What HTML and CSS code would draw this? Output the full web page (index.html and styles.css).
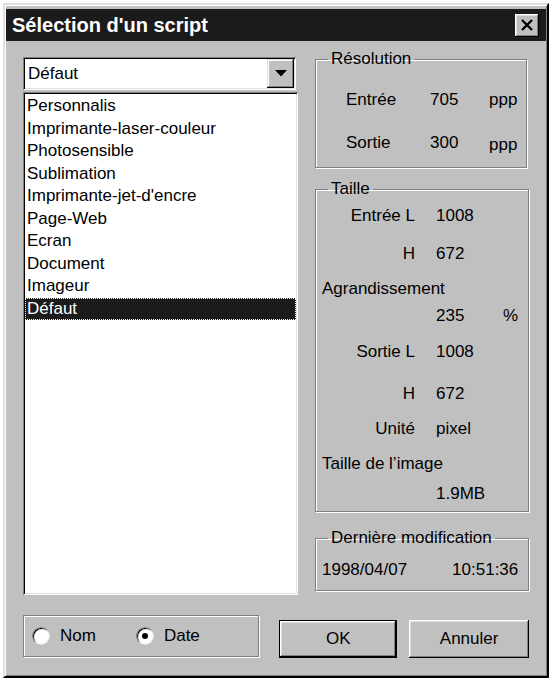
FILE: index.html
```html
<!DOCTYPE html>
<html lang="fr">
<head>
    <meta charset="UTF-8">
    <title>Sélection d'un script</title>
    <link rel="stylesheet" href="styles.css">
</head>
<body>

<div class="window">
    <div class="titlebar">
        <span class="title">Sélection d'un script</span>
        <button class="close-btn">
            <svg width="14" height="12" viewBox="0 0 14 12">
                <path d="M2 1 L12 11 M12 1 L2 11" stroke="#000" stroke-width="2.4" fill="none"/>
            </svg>
        </button>
    </div>

    <div class="content">
        <div class="main">
            <div class="left-col">
                <div class="combo">
                    <span class="combo-value">Défaut</span>
                    <span class="combo-btn">
                        <svg width="12" height="7" viewBox="0 0 12 7"><path d="M0 0 H12 L6 6.5 Z" fill="#000"/></svg>
                    </span>
                </div>
                <ul class="listbox">
                    <li>Personnalis</li>
                    <li>Imprimante-laser-couleur</li>
                    <li>Photosensible</li>
                    <li>Sublimation</li>
                    <li>Imprimante-jet-d'encre</li>
                    <li>Page-Web</li>
                    <li>Ecran</li>
                    <li>Document</li>
                    <li>Imageur</li>
                    <li class="selected">Défaut</li>
                </ul>
            </div>

            <div class="right-col">
                <fieldset class="group group-res">
                    <legend>Résolution</legend>
                    <div class="res-grid">
                        <span>Entrée</span><span>705</span><span>ppp</span>
                        <span>Sortie</span><span>300</span><span class="low">ppp</span>
                    </div>
                </fieldset>

                <fieldset class="group group-size">
                    <legend>Taille</legend>
                    <div class="size-grid">
                        <span class="lbl">Entrée L</span><span>1008</span><span></span>
                        <span class="lbl">H</span><span>672</span><span></span>
                        <span class="wide">Agrandissement</span>
                        <span></span><span>235</span><span>%</span>
                        <span class="lbl">Sortie L</span><span>1008</span><span></span>
                        <span class="lbl">H</span><span>672</span><span></span>
                        <span class="lbl">Unité</span><span>pixel</span><span></span>
                        <span class="wide">Taille de l’image</span>
                        <span></span><span>1.9MB</span><span></span>
                    </div>
                </fieldset>

                <fieldset class="group group-date">
                    <legend>Dernière modification</legend>
                    <div class="date-row">
                        <span>1998/04/07</span>
                        <span>10:51:36</span>
                    </div>
                </fieldset>
            </div>
        </div>

        <div class="footer">
            <div class="radio-group">
                <label class="radio"><span class="radio-dot"></span>Nom</label>
                <label class="radio"><span class="radio-dot checked"></span>Date</label>
            </div>
            <button class="btn btn-default">OK</button>
            <button class="btn">Annuler</button>
        </div>
    </div>
</div>

</body>
</html>
```

FILE: styles.css
```css
body {
    margin: 0;
    padding: 3px;
    background: #fff;
    font-family: "Liberation Sans", Arial, sans-serif;
    font-size: 17px;
    color: #000;
}
.window {
    width: 546px;
    box-sizing: border-box;
    background: #c0c0c0;
    border: 2px solid;
    border-color: #dfdfdf #000 #000 #dfdfdf;
    box-shadow: inset 1px 1px #fff, inset -1px -1px #808080;
    padding: 4px 1px 1px 1px;
}
.titlebar {
    height: 32px;
    background: #1b1b1b;
    color: #fff;
    display: flex;
    align-items: center;
    justify-content: space-between;
    padding: 0 7px 0 6px;
}
.title {
    font-weight: bold;
    font-size: 20px;
}
.close-btn {
    width: 24px;
    height: 23px;
    padding: 0;
    border: 0;
    background: #c0c0c0;
    display: flex;
    align-items: center;
    justify-content: center;
    box-shadow: inset -1px -1px #000, inset 1px 1px #fff, inset -2px -2px #808080, inset 2px 2px #dfdfdf;
}

.content {
    padding: 8px 17px 17px 17px;
}
.main {
    display: flex;
    gap: 17px;
}
.left-col {
    width: 275px;
    padding-top: 8px;
}
.right-col {
    width: 214px;
}

/* sunken fields */
.combo {
    height: 33px;
    box-sizing: border-box;
    background: #fff;
    display: flex;
    align-items: center;
    justify-content: space-between;
    padding: 2px 2px 2px 5px;
    box-shadow: inset 1px 1px #808080, inset -1px -1px #fff, inset 2px 2px #000, inset -2px -2px #dfdfdf;
    width: 273px;
}
.combo-btn {
    width: 27px;
    height: 29px;
    background: #c0c0c0;
    display: flex;
    align-items: center;
    justify-content: center;
    box-shadow: inset -1px -1px #000, inset 1px 1px #dfdfdf, inset -2px -2px #808080, inset 2px 2px #fff;
}
.listbox {
    list-style: none;
    margin: 2px 0 0 0;
    padding: 3px 2px 2px 2px;
    height: 503px;
    box-sizing: border-box;
    background: #fff;
    box-shadow: inset 1px 1px #808080, inset -1px -1px #fff, inset 2px 2px #000, inset -2px -2px #dfdfdf;
}
.listbox li {
    line-height: 22.5px;
    padding-left: 2px;
}
.listbox li.selected {
    background: #1b1b1b;
    color: #fff;
    outline: 1px dotted #fff;
    outline-offset: -1px;
}

/* group boxes */
.group {
    margin: 0;
    padding-left: 6px;
    padding-right: 0;
    border: 1px solid #808080;
    box-shadow: inset 1px 1px #fff, 1px 1px #fff;
}
.group legend {
    margin-left: 6px;
    padding: 0 3px;
    line-height: 20px;
}
.group-res {
    padding-top: 21px;
    padding-bottom: 14px;
    width: 212px;
    box-sizing: border-box;
}
.group-size {
    margin-top: 11px;
    padding-top: 7px;
    padding-bottom: 7px;
}
.group-date {
    margin-top: 16px;
    padding-top: 12px;
    padding-bottom: 10px;
}
.res-grid {
    display: grid;
    margin-left: 24px;
    grid-template-columns: 84px 59px auto;
    grid-template-rows: 43px 20px;
    line-height: 20px;
}
.res-grid .low {
    padding-top: 2px;
}
.size-grid {
    display: grid;
    grid-template-columns: 93px 46px auto;
    column-gap: 21px;
    grid-template-rows: 38px 35px 27px 36px 42px 35px 35px 30px 20px;
    line-height: 20px;
}
.size-grid .lbl {
    text-align: right;
}
.size-grid .wide {
    grid-column: 1 / -1;
}
.date-row {
    display: flex;
    gap: 45px;
    line-height: 20px;
}

/* footer */
.footer {
    display: flex;
    align-items: flex-start;
    margin-top: 20px;
}
.radio-group {
    width: 237px;
    height: 42px;
    box-sizing: border-box;
    border: 1px solid #808080;
    box-shadow: inset 1px 1px #fff, 1px 1px #fff;
    display: flex;
    align-items: center;
    gap: 40px;
    padding-left: 8px;
}
.radio {
    display: flex;
    align-items: center;
    gap: 10px;
}
.radio-dot {
    width: 18px;
    height: 18px;
    box-sizing: border-box;
    border-radius: 50%;
    background: #fff;
    border: 1px solid;
    border-color: #808080 #dfdfdf #dfdfdf #808080;
    box-shadow: inset 1px 1px #000;
    display: flex;
    align-items: center;
    justify-content: center;
}
.radio-dot.checked::after {
    content: "";
    width: 6px;
    height: 6px;
    border-radius: 50%;
    background: #000;
}
.btn {
    margin-top: 5px;
    height: 38px;
    width: 120px;
    border: 0;
    background: #c0c0c0;
    font-family: inherit;
    font-size: 17px;
    color: #000;
    box-shadow: inset -1px -1px #000, inset 1px 1px #fff, inset -2px -2px #808080, inset 2px 2px #dfdfdf;
    margin-left: 12px;
}
.btn-default {
    width: 118px;
    margin-left: 20px;
    border: 1px solid #000;
}
```
